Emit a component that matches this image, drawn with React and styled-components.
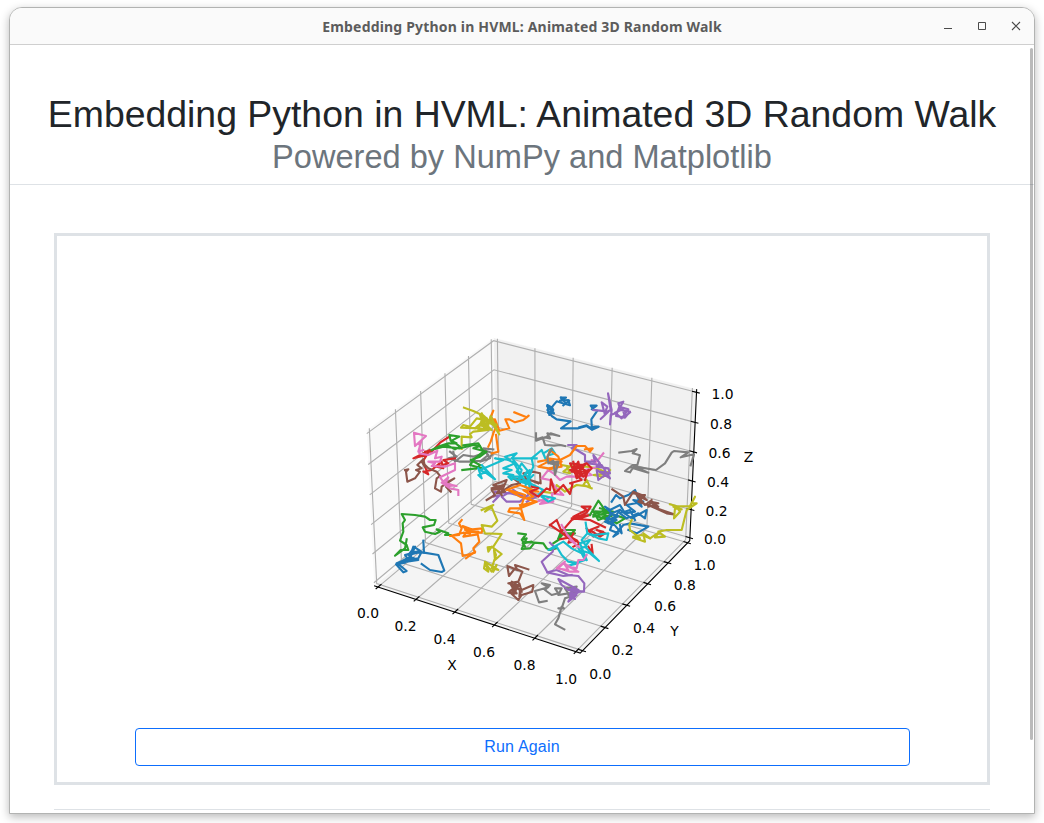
import React from 'react';
import styled, { createGlobalStyle } from 'styled-components';

const GlobalStyle = createGlobalStyle`
  * { box-sizing: border-box; }
  body { margin: 0; background: #fff; overflow: hidden; font-family: "Liberation Sans", Arial, sans-serif; }
`;

const Desktop = styled.div`
  width: 1044px;
  height: 823px;
  padding: 7px 9px 9px;
  overflow: hidden;
`;

const Window = styled.div`
  width: 1026px;
  height: 807px;
  border: 1px solid #b2b3b2;
  border-radius: 13px 13px 0 0;
  box-shadow: 0 3px 10px rgba(0, 0, 0, 0.28);
  overflow: hidden;
  display: flex;
  flex-direction: column;
  background: #fff;
`;

const TitleBar = styled.header`
  height: 37px;
  flex: none;
  display: grid;
  grid-template-columns: 1fr auto 1fr;
  align-items: center;
  background: #fafafa;
  border-bottom: 1px solid #cfcfcf;
`;

const Title = styled.div`
  grid-column: 2;
  padding-top: 1px;
  font: bold 14px/35px "Noto Sans", "Open Sans", sans-serif;
  letter-spacing: 0.18px;
  color: #5c5c5c;
  white-space: nowrap;
`;

const Controls = styled.div`
  justify-self: end;
  display: flex;
  gap: 18px;
  padding-right: 10px;
  svg { display: block; }
`;

const Viewport = styled.main`
  flex: 1;
  min-height: 0;
  position: relative;
  overflow: hidden;
`;

const ScrollThumb = styled.div`
  position: absolute;
  top: 3px;
  right: 1px;
  width: 3px;
  height: 692px;
  border-radius: 2px;
  background: rgba(0, 0, 0, 0.27);
`;

const Heading = styled.div`
  height: 140px;
  padding-top: 47px;
  border-bottom: 1px solid #dee2e6;
  text-align: center;
`;

const H1 = styled.h1`
  margin: 0;
  font-size: 37.4px;
  line-height: 45px;
  font-weight: 400;
  color: #212529;
  white-space: nowrap;
`;

const Subtitle = styled.div`
  font-size: 32.6px;
  line-height: 39px;
  color: #6c757d;
`;

const Content = styled.section`
  margin: 48px 44px 0;
  padding-bottom: 24px;
  border-bottom: 1px solid #dee2e6;
`;

const Card = styled.div`
  height: 552px;
  border: 3px solid #dee2e6;
  display: flex;
  flex-direction: column;
  align-items: center;
`;

const Plot = styled.svg`
  display: block;
  flex: none;
  width: 930px;
  height: 492px;
`;

const AxisText = styled.text`
  font: 13.89px "DejaVu Sans", sans-serif;
  text-anchor: middle;
  fill: #000;
`;

const RunButton = styled.button`
  width: 775px;
  height: 38px;
  flex: none;
  border: 1px solid #0d6efd;
  border-radius: 4px;
  background: #fff;
  color: #0d6efd;
  font: 16px/24px "Liberation Sans", Arial, sans-serif;
  letter-spacing: 0.2px;
  padding: 0 0 1px;
`;

/* Perspective camera: azimuth -60 deg, elevation 30 deg, distance 10 */
const CX = 534.8;
const CY = 487.8;
const SCALE = 1984;
const proj = (x, y, z) => {
  const a = (x - 0.5) * 1.1428;
  const b = (y - 0.5) * 1.1428;
  const c = (z - 0.5) * 0.8571;
  const u = 0.866 * a + 0.5 * b;
  const w = -0.25 * a + 0.433 * b + 0.866 * c;
  const d = 10 - (0.433 * a - 0.75 * b + 0.5 * c);
  return [CX + (SCALE * u) / d, CY - (SCALE * w) / d];
};
const pts = (...list) =>
  list.map((p) => proj(...p).map((n) => n.toFixed(2)).join(',')).join(' ');

const L = -1 / 48;
const H = 1 + 1 / 48;
const TICKS = [0, 0.2, 0.4, 0.6, 0.8, 1];

const LABELS = [
  ['0.0', 368, 614], ['0.2', 405.5, 626.5], ['0.4', 444.5, 639.5],
  ['0.6', 484, 653], ['0.8', 524.5, 666], ['1.0', 566, 680], ['X', 452, 665.5],
  ['0.0', 600.3, 674.5], ['0.2', 622.5, 651], ['0.4', 644, 629],
  ['0.6', 665, 607], ['0.8', 684.7, 585.5], ['1.0', 704.5, 565.5], ['Y', 674.5, 631.5],
  ['1.0', 722.5, 394.5], ['0.8', 721, 424.5], ['0.6', 719.5, 454],
  ['0.4', 718, 483], ['0.2', 716.5, 511.5], ['0.0', 715, 539.5], ['Z', 748.5, 458],
];

const C = {
  blue: '#1f77b4', orange: '#ff7f0e', green: '#2ca02c', red: '#d62728', purple: '#9467bd',
  brown: '#8c564b', pink: '#e377c2', gray: '#7f7f7f', olive: '#bcbd22', cyan: '#17becf',
};

/* Each walk: colour, origin of its tile, points in thirds of a pixel */
const WALKS = [
  ['gray', 360, 420, '270,95 290,110 265,115 300,125 330,125 380,120 400,100 370,90 385,105 360,125 390,115 370,85 400,88'],
  ['gray', 360, 420, '280,95 285,125 310,105 340,110 370,100'],
  ['red', 360, 420, '265,52 240,68 215,95 195,95 200,105 160,115 210,90 188,125 205,163 190,155 215,150 245,125 250,145 230,140 265,130 250,120 285,115'],
  ['brown', 360, 420, '135,150 145,148 138,155 142,185 165,175 180,155 168,150 185,145 172,135 190,118 195,140 185,125 205,145 230,155 240,168 230,175 225,205 243,215 245,200 283,175 255,190 275,195 258,200 272,215'],
  ['pink', 360, 420, '190,90 175,95 185,60 165,78 162,38 198,48 165,78 180,65 178,100 205,105 232,92 225,115 245,110 240,125 205,125 225,130 215,138 255,140 285,130 285,150 240,172 250,185 265,172 255,195 290,198 245,188 270,205 295,210 295,225'],
  ['orange', 460, 330, '163,247 200,262 206,257 190,270 165,277 148,268 136,268 148,295 118,302 105,268 88,272 100,242 92,260 110,285 100,310 92,335 85,350'],
  ['orange', 460, 330, '108,315 115,365 95,370'],
  ['olive', 460, 330, '12,233 40,243 72,258 90,275 110,285 60,255 75,300 55,300 68,262 80,300 92,258 118,313 100,285 75,270 50,265 30,290 10,285 3,293 60,295 85,300 40,305 30,312 35,322 5,320 5,357'],
  ['olive', 460, 330, '65,250 85,285 60,285 95,300 70,275 45,295 80,265'],
  ['green', 360, 420, '215,90 240,78 265,70 290,70 272,62 268,45 298,50 275,62 300,80 285,88 260,75 225,87 250,80 300,85 340,75 360,78 340,85 380,95 360,110 332,120 360,135 350,145 307,150'],
  ['green', 360, 420, '310,76 355,70 370,95 345,115 330,135 365,145'],
  ['blue', 460, 330, '303,203 318,203 300,212 325,210 330,226 308,220 290,214 275,232 262,225 268,255 278,235 262,240 275,258 290,268 332,274 303,295 355,295 380,288 396,299 416,290 394,292'],
  ['blue', 460, 330, '303,203 318,220 328,212 310,226'],
  ['blue', 460, 330, '262,228 280,240 264,248 282,250 270,232'],
  ['blue', 580, 370, '-2,172 20,166 36,178 34,148 52,122 35,118 50,107 32,107 40,118'],
  ['purple', 580, 370, '40,120 60,122 85,125 62,147 75,135 65,97 82,110 75,128 92,120 84,70 95,120 90,163 92,135 110,128 130,95 115,100 122,120 150,125 135,143 108,138 118,110 145,118 125,145 105,128 128,118 135,140 150,127'],
  ['gray', 580, 370, '118,248 155,243 170,237 158,250 180,256 172,285 158,285 135,303 150,307 162,288 195,305 150,292 205,308 165,290 228,300 255,280 275,248 282,243 325,247 302,262 342,253 332,286'],
  ['gray', 460, 330, '228,310 228,332 255,322 270,325 262,310 298,318 272,310 258,322 230,328 248,322 255,345 282,347 300,345 315,348'],
  ['purple', 470, 430, '70,215 90,195 70,200 75,185 120,190 160,200 130,180 95,200 110,215 150,215 180,190 200,200 170,215'],
  ['brown', 470, 430, '50,210 75,195 65,180 95,175 70,165 110,150 95,185 125,165 150,160 130,145 170,150 160,130 190,125 210,130 212,160 180,150 205,160'],
  ['brown', 470, 430, '65,175 100,165 80,190 105,185 75,165 95,195'],
  ['olive', 470, 430, '215,185 255,190 260,165 285,185 320,165 360,170 350,150 340,165 365,175'],
  ['olive', 470, 430, '275,105 300,110 280,125 300,130 290,108 350,110 380,115 415,130 370,135 400,140 420,120'],
  ['pink', 470, 430, '400,70 380,95 365,90 385,110 345,120 365,135 330,140 290,140 270,150 250,130 235,120 215,145 240,150 255,170 280,195 245,190 250,215 210,222 235,205 200,215'],
  ['purple', 470, 430, '295,45 320,45 305,55 320,60 345,75 345,95 375,95 370,75 390,100 380,110 415,115 420,130 390,125 405,135 385,150 380,120 420,145 395,105 350,100'],
  ['cyan', 470, 430, '25,115 35,145 25,135 50,125 35,105 75,148 50,130 30,120 100,90 75,85 120,90 105,80 140,70 125,85 200,85'],
  ['cyan', 470, 430, '115,90 135,100 100,115 125,120 100,130 130,135 125,150 115,140 155,140 135,105 130,90 155,120 145,150 175,125 155,100 140,125 170,155 190,135 175,150 180,180 165,170 190,110 185,85 215,60 230,95 220,70 245,55 255,70 240,75'],
  ['cyan', 470, 430, '130,145 175,160 150,155 185,165 165,130 180,120 170,160'],
  ['cyan', 470, 430, '160,150 190,165 220,180 205,195 255,205 235,215 215,200'],
  ['orange', 470, 430, '205,95 230,90 240,60 265,80 275,110 235,115 205,110 235,95 260,100 275,95 240,118 265,112 235,85 270,90 300,75 320,48 345,48 360,65 368,55 345,58'],
  ['gray', 470, 430, '245,58 232,80 235,100 250,92 255,135 265,95 240,100 265,105'],
  ['orange', 470, 430, '110,180 150,165 205,185 160,180 190,200 170,205 200,215 155,225 165,195 150,190 115,180 150,200 200,215 150,235 120,235 115,245 150,250 163,270 150,225'],
  ['red', 470, 430, '185,170 205,175 180,185 205,200 230,175 240,180 243,148 255,190 280,165 300,192 308,160 300,160 335,150 315,130 300,100 345,105 310,120 325,95 335,135 300,120 350,100 365,115 340,140 310,110 320,145 355,120 345,150'],
  ['red', 470, 430, '310,95 318,128 340,112 322,105 350,125 305,125'],
  ['green', 360, 500, '272,105 255,105 265,100 230,88 240,95 225,102 195,95 188,82 222,75 227,60 210,60 195,50 165,45 125,42 135,60 128,70 130,95 120,122 140,135 145,150 122,150 105,167 135,145 140,118'],
  ['blue', 360, 500, '190,122 192,158 235,165 253,212 245,216 210,210 185,192'],
  ['blue', 360, 500, '192,158 155,155 160,140 180,152 135,165 145,180 175,175 185,155 145,165 165,140 150,175 110,190 140,185 175,180 150,170 108,193 130,217 140,213 115,192 135,188'],
  ['orange', 360, 500, '305,60 297,70 305,85 297,105 270,108 310,98 330,100 308,78 355,95 315,90 368,85 365,98 320,95 310,110 353,103 358,125 340,145 345,158 308,168 303,130 275,107'],
  ['orange', 360, 500, '345,155 318,175'],
  ['olive', 360, 500, '365,30 400,15 375,35 395,22 412,62 395,80 365,75 375,100 425,102 400,140 383,142 385,155 395,140 425,162 405,180 402,150 408,165 395,205 415,210 375,185 385,215 372,205 375,188 395,215 410,195 400,215'],
  ['green', 490, 500, '85,100 108,103 95,120 110,115 95,147 120,145 132,130 125,125 98,130 105,140 98,125 160,130 170,145 180,150 200,145'],
  ['green', 490, 500, '205,115 215,90 255,90 235,110 255,100 220,100 205,120 190,130'],
  ['brown', 490, 500, '115,208 75,195 82,210 52,198 57,228 75,205 97,215 85,245 55,250 85,260 55,278 80,280 60,250 90,270 88,290 95,270 130,255 127,275 95,285 85,300 58,275 82,255 65,245 70,285 88,250 95,275'],
  ['gray', 490, 500, '170,303 147,307 135,273 175,262 155,250 180,255 165,270 185,285 205,280 195,265 215,265 205,285 235,280 225,265 260,260 235,285 265,270 240,290 225,295 215,325 205,325 222,325 215,320 205,355 195,373 223,388'],
  ['purple', 490, 500, '180,128 192,140 188,155 155,185 172,217 200,210 235,225 265,228 283,250 282,275 240,272 265,270 205,237 215,255 235,270 255,262 240,285 260,285 235,305 250,280 270,275 240,290 255,297 240,280'],
  ['purple', 490, 500, '172,217 220,228 245,225'],
  ['red', 490, 500, '180,75 200,60 215,95 245,60 290,38 302,20 275,20 290,30 250,50 300,45 270,55 245,55 300,60 345,82'],
  ['red', 490, 500, '180,75 210,95 250,125 230,105 270,130 250,140'],
  ['red', 490, 500, '210,118 240,112 222,100 262,122 235,128 250,100'],
  ['red', 490, 500, '305,135 308,160 295,140'],
  ['red', 570, 470, '50,175 70,200 100,185 80,180 105,190 90,200 60,180 85,170'],
  ['green', 570, 470, '60,135 85,92 105,120 70,135 115,150 100,125 135,135 165,145 140,160 110,140 85,150 70,125 130,125 90,115'],
  ['green', 570, 470, '70,140 110,128 95,145 125,138 85,132'],
  ['blue', 570, 470, '125,95 138,75 150,85 175,75 195,60 215,110 190,90 220,95 170,105 195,125 165,130 150,105 120,120 105,110 125,130 110,150 130,165 105,155 135,140 120,180 145,190 130,200 160,165 180,160 235,170 200,190 175,180'],
  ['blue', 570, 470, '150,165 155,190 125,155 150,120 185,145 230,120 225,145 205,130 170,145 150,130 180,120 195,150'],
  ['blue', 570, 470, '110,145 140,150 115,160 145,138 120,132 150,120'],
  ['brown', 570, 470, '127,58 160,80 165,105 190,65 215,75 230,90 200,75 225,105 245,90 235,110 265,100 240,95 265,110 235,105 290,130 312,133 260,115 205,95 225,75 190,70'],
  ['olive', 570, 470, '300,103 318,108 330,125 312,145 315,115 335,118 310,110 360,108 375,80 365,100 380,100 350,120 335,180 290,180 265,185 285,200 255,202 270,185 240,205 215,195 190,200 210,205 180,180 178,165 185,150'],
  ['olive', 570, 470, '190,203 225,215 220,190 240,205'],
  ['cyan', 490, 500, '287,68 292,100 310,105 355,100 350,120 325,115 292,100 275,120 290,140 265,145 275,160 245,145 220,125 175,150 200,140 215,165 235,185 265,190 235,197 285,180 270,150 300,160 327,183 285,140 300,120 270,130 290,180'],
  ['pink', 490, 500, '215,75 232,105 255,130 240,120 268,142'],
  ['pink', 490, 500, '290,165 280,180 265,180 260,205 235,200 265,215 240,215 205,205 225,185 200,205 235,210 222,190 250,205'],
];

const RandomWalkChart = () => (
  <Plot viewBox="57 236 930 492">
    <g stroke="#fff" strokeOpacity="0.5">
      <polygon fill="#f9f9f9" points={pts([L, L, L], [L, H, L], [L, H, H], [L, L, H])} />
      <polygon fill="#f1f1f1" points={pts([L, H, L], [H, H, L], [H, H, H], [L, H, H])} />
      <polygon fill="#f4f4f4" points={pts([L, L, L], [H, L, L], [H, H, L], [L, H, L])} />
    </g>
    <g fill="none" stroke="#b0b0b0" strokeWidth="1.11">
      {TICKS.map((t) => (
        <g key={t}>
          <polyline points={pts([t, L, L], [t, H, L], [t, H, H])} />
          <polyline points={pts([H, t, L], [L, t, L], [L, t, H])} />
          <polyline points={pts([L, L, t], [L, H, t], [H, H, t])} />
        </g>
      ))}
    </g>
    <g fill="none" stroke="#000" strokeWidth="1.11">
      <polyline points={pts([L, L, L], [H, L, L], [H, H, L], [H, H, H])} />
      {TICKS.map((t) => (
        <g key={t}>
          <polyline points={pts([t, L - 0.018, L], [t, L + 0.028, L])} />
          <polyline points={pts([H + 0.016, t, L], [H - 0.022, t, L])} />
          <polyline points={pts([H + 0.016, H, t], [H - 0.022, H, t])} />
        </g>
      ))}
    </g>
    <g fill="none" strokeWidth="6.4" strokeLinejoin="round" strokeLinecap="square">
      {WALKS.map(([color, x, y, points], i) => (
        <polyline
          key={i}
          stroke={C[color]}
          points={points}
          transform={`translate(${x} ${y}) scale(0.33333)`}
        />
      ))}
    </g>
    {LABELS.map(([label, x, y], i) => (
      <AxisText key={i} x={x} y={y + 4.4}>{label}</AxisText>
    ))}
  </Plot>
);

export default function App() {
  return (
    <Desktop>
      <GlobalStyle />
      <Window>
        <TitleBar>
          <Title>Embedding Python in HVML: Animated 3D Random Walk</Title>
          <Controls>
            <svg width="16" height="16" viewBox="0 0 16 16"><path d="M4 10.5h8" stroke="#4a4a4a" fill="none" /></svg>
            <svg width="16" height="16" viewBox="0 0 16 16"><path d="M4.5 4.5h7v7h-7z" stroke="#4a4a4a" fill="none" /></svg>
            <svg width="16" height="16" viewBox="0 0 16 16"><path d="M4 4l8 8M12 4l-8 8" stroke="#4a4a4a" strokeWidth="1.1" fill="none" /></svg>
          </Controls>
        </TitleBar>
        <Viewport>
          <Heading>
            <H1>Embedding Python in HVML: Animated 3D Random Walk</H1>
            <Subtitle>Powered by NumPy and Matplotlib</Subtitle>
          </Heading>
          <Content>
            <Card>
              <RandomWalkChart />
              <RunButton>Run Again</RunButton>
            </Card>
          </Content>
          <ScrollThumb />
        </Viewport>
      </Window>
    </Desktop>
  );
}
